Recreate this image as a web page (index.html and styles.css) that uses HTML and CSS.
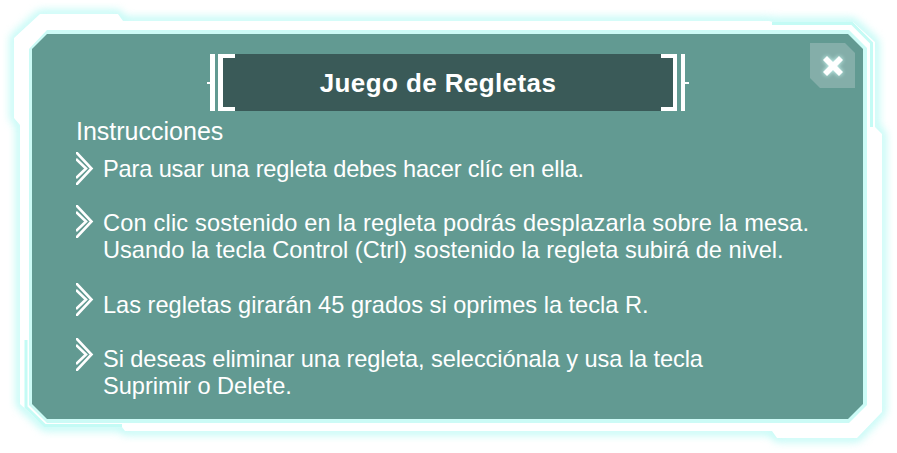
FILE: index.html
```html
<!DOCTYPE html>
<html lang="es">
<head>
<meta charset="utf-8">
<title>Juego de Regletas</title>
<link rel="stylesheet" href="styles.css">
</head>
<body>
<main class="stage">
  <svg class="frame" width="897" height="453" viewBox="0 0 897 453" aria-hidden="true">
    <path class="halo" d="M14 38 40 14H118L123 21H769L773 22H853L875 42V127L882 134V412L857 438H777L772 431H125L122 427H45L20 404V125L14 118Z"/>
    <path class="outer" d="M14 38 40 14H118L123 21H769L773 22H853L875 42V127L882 134V412L857 438H777L772 431H125L122 427H45L20 404V125L14 118Z"/>
    <path class="line" d="M772 23.500H852L871.500 43V127"/>
    <path class="line" d="M26 340V407L45 425.500H122"/>
    <path class="inner" d="M29 405V49L47 30H849L867 48V405L849 423H47Z"/>
  </svg>

  <section class="panel">
    <header class="title-row">
      <svg class="deco" width="28" height="57" viewBox="0 0 28 57" aria-hidden="true">
        <path d="M3 0H8V57H3ZM0 28H3V30H0ZM11 0H28V4H16V53H28V57H11Z"/>
      </svg>
      <h1 class="title">Juego de Regletas</h1>
      <svg class="deco" width="28" height="57" viewBox="0 0 28 57" aria-hidden="true">
        <path d="M0 0H16V57H0V53H12V4H0ZM20 0H24V57H20ZM24 28H28V30H24Z"/>
      </svg>
    </header>

    <button class="close" type="button" aria-label="Cerrar">
      <svg width="24" height="24" viewBox="0 0 24 24" aria-hidden="true">
        <path d="M2 6 6 2 12 8 18 2 22 6 16 12 22 18 18 22 12 16 6 22 2 18 8 12Z"/>
      </svg>
    </button>

    <h2 class="subtitle">Instrucciones</h2>
    <ul class="list">
      <li class="item">
        <svg class="chev" width="18" height="33" viewBox="0 0 18 33" aria-hidden="true"><path d="M0 0 15.500 16.500 0 33M0 7 10 16.500 0 26"/></svg>
        <p class="text tight">Para usar una regleta debes hacer clíc en ella.</p>
      </li>
      <li class="item">
        <svg class="chev" width="18" height="33" viewBox="0 0 18 33" aria-hidden="true"><path d="M0 0 15.500 16.500 0 33M0 7 10 16.500 0 26"/></svg>
        <p class="text"><span class="wide">Con clic sostenido en la regleta podrás desplazarla sobre la mesa.</span><br>Usando la tecla Control (Ctrl) sostenido la regleta subirá de nivel.</p>
      </li>
      <li class="item">
        <svg class="chev" width="18" height="33" viewBox="0 0 18 33" aria-hidden="true"><path d="M0 0 15.500 16.500 0 33M0 7 10 16.500 0 26"/></svg>
        <p class="text">Las regletas girarán 45 grados si oprimes la tecla R.</p>
      </li>
      <li class="item">
        <svg class="chev" width="18" height="33" viewBox="0 0 18 33" aria-hidden="true"><path d="M0 0 15.500 16.500 0 33M0 7 10 16.500 0 26"/></svg>
        <p class="text"><span class="snug">Si deseas eliminar una regleta, selecciónala y usa la tecla</span><br>Suprimir o Delete.</p>
      </li>
    </ul>
  </section>
</main>
</body>
</html>
```
FILE: styles.css
```css
* { box-sizing: border-box; }
html, body { margin: 0; background: #fff; }
body { font-family: "Liberation Sans", Arial, sans-serif; color: #fff; }

.stage { position: relative; width: 897px; height: 453px; overflow: hidden; padding: 34px 34px 34px 32px; }
.frame { position: absolute; inset: 0; }
.halo { fill: #fff; stroke: #7ff5ec; stroke-width: 4; filter: blur(5px); }
.outer { fill: #fff; }
.line { fill: none; stroke: #c4fbf5; stroke-width: 3; }
.inner { fill: #ccfbf6; }

.panel {
  position: relative;
  width: 831px;
  height: 385px;
  padding: 20px 0 0 44px;
  background: #629a92;
  clip-path: polygon(15px 0, 816px 0, 831px 15px, 831px 370px, 816px 385px, 15px 385px, 0 370px, 0 15px);
}

.title-row { display: flex; height: 57px; margin-left: 131px; width: 482px; }
.deco { flex: none; display: block; position: relative; fill: #fff; }
.title {
  flex: 1;
  margin: 0 -12px;
  padding: 1px 20px 0 0;
  background: #3a5a58;
  font-size: 26px;
  line-height: 56px;
  font-weight: 700;
  letter-spacing: .4px;
  text-align: center;
}

.close {
  position: absolute;
  top: 9px;
  right: 8px;
  width: 45px;
  height: 45px;
  display: flex;
  align-items: center;
  justify-content: center;
  border: 0;
  padding: 0;
  background: #84aea9;
  clip-path: polygon(0 0, 35px 0, 45px 10px, 45px 45px, 10px 45px, 0 35px);
}
.close svg { fill: #fff; filter: drop-shadow(0 0 2px #cffcf7); }

.subtitle { margin: 7px 0 0; font-size: 25px; line-height: 27px; font-weight: 400; }

.list { list-style: none; margin: 11px 0 0; padding: 0; display: flex; flex-direction: column; gap: 27px; }
.item { display: flex; gap: 9px; }
.item:nth-child(2) { margin-top: -2px; }
.item:nth-child(3) { margin-top: 1px; }
.chev { flex: none; margin-top: -4px; fill: none; stroke: #fff; stroke-width: 2.600; }
.item:nth-child(2) .chev { margin-top: -5px; }
.item:nth-child(3) .chev { margin-top: -9px; }
.item:nth-child(4) .chev { margin-top: -8px; }
.text { margin: 0; font-size: 23.600px; line-height: 27px; white-space: nowrap; }
.tight { letter-spacing: -.15px; }
.wide { letter-spacing: .17px; }
.snug { letter-spacing: -.08px; }
```
